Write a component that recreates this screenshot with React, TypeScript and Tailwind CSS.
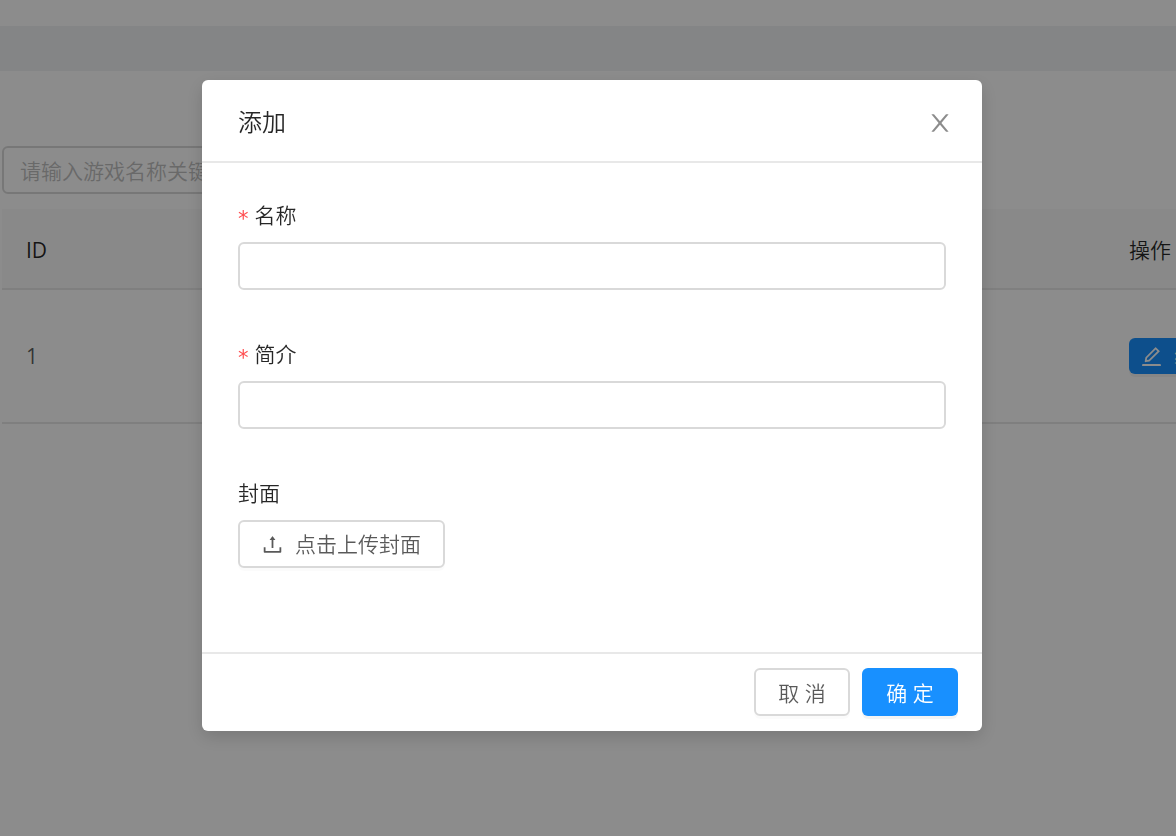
import { useState } from 'react';
import type { ReactNode } from 'react';

const closePath =
  'M563.8 512l262.5-312.9c4.4-5.2.7-13.1-6.1-13.1h-79.8c-4.7 0-9.2 2.1-12.3 5.7L511.6 449.8 295.1 191.7c-3-3.6-7.5-5.7-12.3-5.7H203c-6.8 0-10.5 7.9-6.1 13.1L459.4 512 196.9 824.9A7.95 7.95 0 0 0 203 838h79.8c4.7 0 9.2-2.1 12.3-5.7l216.5-258.1 216.5 258.1c3 3.6 7.5 5.7 12.3 5.7h79.8c6.8 0 10.5-7.9 6.1-13.1L563.8 512z';
const uploadPath =
  'M400 317.7h73.9V656c0 4.4 3.6 8 8 8h60c4.4 0 8-3.6 8-8V317.7H624c6.7 0 10.4-7.7 6.3-12.9L518.3 163a8 8 0 0 0-12.6 0l-112 141.7c-4.1 5.3-.4 13 6.3 13zM878 626h-60c-4.4 0-8 3.6-8 8v154H214V634c0-4.4-3.6-8-8-8h-60c-4.4 0-8 3.6-8 8v198c0 17.7 14.3 32 32 32h684c17.7 0 32-14.3 32-32V634c0-4.4-3.6-8-8-8z';
const editPath =
  'M257.7 752c2 0 4-.2 6-.5L431.9 722c2-.4 3.9-1.3 5.3-2.8l423.9-423.9a9.96 9.96 0 0 0 0-14.1L694.9 114.9c-1.9-1.9-4.4-2.9-7.1-2.9s-5.2 1-7.1 2.9L256.8 538.8c-1.5 1.5-2.4 3.3-2.8 5.3l-29.5 168.2a33.5 33.5 0 0 0 9.4 29.8c6.6 6.4 14.9 9.9 23.8 9.9zm67.4-174.4L687.8 215l73.3 73.3-362.7 362.6-88.9 15.7 15.6-89zM880 836H144c-17.7 0-32 14.3-32 32v36c0 4.4 3.6 8 8 8h784c4.4 0 8-3.6 8-8v-36c0-17.7-14.3-32-32-32z';

function Icon({ d, className }: { d: string; className: string }) {
  return (
    <svg viewBox="64 64 896 896" fill="currentColor" aria-hidden="true" className={className}>
      <path d={d} />
    </svg>
  );
}

function Field({ id, label, required, children }: { id: string; label: string; required?: boolean; children: ReactNode }) {
  return (
    <div className="mb-12">
      <label htmlFor={id} className="mb-[10px] flex h-[33px] items-center leading-[33px] text-black/85">
        {required && (
          <span className="mr-[6px] pt-2 font-['DejaVu_Sans',sans-serif] text-[21px] leading-none font-normal text-[#ff4d4f]">*</span>
        )}
        {label}
      </label>
      {children}
    </div>
  );
}

const inputClass =
  'block h-12 w-full rounded-md border-2 border-[#d9d9d9] bg-white px-4 outline-none focus:border-[#40a9ff]';

function AddModal({ onClose }: { onClose: () => void }) {
  const [name, setName] = useState('');
  const [intro, setIntro] = useState('');

  return (
    <div className="fixed inset-0 flex items-start justify-center overflow-auto bg-black/45 pt-20 pl-2">
      <div
        role="dialog"
        aria-modal="true"
        aria-labelledby="modal-title"
        className="w-full max-w-[780px] rounded-md bg-white shadow-[0_6px_18px_rgba(0,0,0,0.15)]"
      >
        <div className="flex items-end justify-between border-b-2 border-[#e8e8e8] py-6 pr-[30px] pl-9">
          <h2 id="modal-title" className="pt-[2px] text-2xl leading-[31px] font-[350] text-black/85">添加</h2>
          <button type="button" aria-label="关闭" onClick={onClose} className="pb-[2px] text-black/45 hover:text-black/75">
            <Icon d={closePath} className="size-6" />
          </button>
        </div>

        <form className="px-9 pt-9 pb-9">
          <Field id="name" label="名称" required>
            <input id="name" type="text" value={name} onChange={(e) => setName(e.target.value)} className={inputClass} />
          </Field>
          <Field id="intro" label="简介" required>
            <input id="intro" type="text" value={intro} onChange={(e) => setIntro(e.target.value)} className={inputClass} />
          </Field>
          <Field id="cover" label="封面">
            <button
              id="cover"
              type="button"
              className="flex h-12 items-center gap-3 rounded-md border-2 border-[#d9d9d9] bg-white px-[22px] text-black/65 shadow-[0_3px_0_rgba(0,0,0,0.015)]"
            >
              <Icon d={uploadPath} className="size-[21px]" />
              <span className="pt-[2px]">点击上传封面</span>
            </button>
          </Field>
        </form>

        <div className="flex justify-end gap-3 border-t-2 border-[#e8e8e8] pt-[14px] pr-6 pb-[15px]">
          <button
            type="button"
            onClick={onClose}
            className="h-12 w-24 rounded-md border-2 border-[#d9d9d9] bg-white pt-1 text-black/65 shadow-[0_3px_0_rgba(0,0,0,0.015)]"
          >
            取 消
          </button>
          <button
            type="button"
            className="h-12 w-24 rounded-md bg-[#1890ff] pt-1 text-white shadow-[0_3px_0_rgba(0,0,0,0.045)]"
          >
            确 定
          </button>
        </div>
      </div>
    </div>
  );
}

export default function App() {
  const [open, setOpen] = useState(true);

  return (
    <div className="min-h-screen overflow-hidden bg-white font-['Open_Sans','Noto_Sans_CJK_SC',sans-serif] text-[21px] font-[350] text-black/65">
      <header className="h-[26px] bg-white" />
      <div className="h-[45px] bg-[#f0f2f5]" />

      <main className="pt-[75px] pl-[2px]">
        <input
          type="text"
          aria-label="游戏名称"
          placeholder="请输入游戏名称关键字"
          className="block h-12 w-[300px] rounded-md border-2 border-[#d9d9d9] px-4 pt-[2px] placeholder:text-[#bfbfbf]"
        />

        {/* the action column runs past the right edge of the window */}
        <div className="-mr-[120px] pt-[15px]">
          <table className="w-full table-fixed border-collapse text-left">
            <thead>
              <tr className="h-20 border-b-2 border-[#e8e8e8] bg-[#fafafa] text-black/85">
                <th className="px-6 pt-1 font-medium">ID</th>
                <th className="w-[191px] px-6 pt-1 font-[350]">操作</th>
              </tr>
            </thead>
            <tbody>
              <tr className="h-[134px] border-b-2 border-[#e8e8e8]">
                <td className="px-6 pt-[2px] font-normal">1</td>
                <td className="px-6">
                  <button
                    type="button"
                    onClick={() => setOpen(true)}
                    className="flex h-9 items-center gap-3 rounded-md bg-[#1890ff] px-3 text-white shadow-[0_3px_0_rgba(0,0,0,0.045)]"
                  >
                    <Icon d={editPath} className="size-[21px]" />
                    编辑
                  </button>
                </td>
              </tr>
            </tbody>
          </table>
        </div>
      </main>

      {open && <AddModal onClose={() => setOpen(false)} />}
    </div>
  );
}
